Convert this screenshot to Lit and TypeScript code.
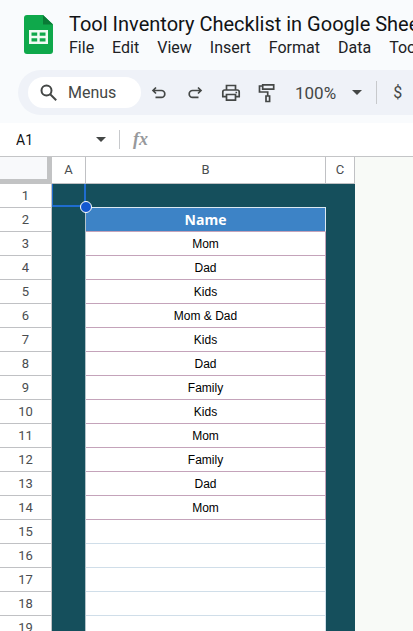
import { LitElement, html, css, svg } from "lit";
import { customElement } from "lit/decorators.js";

const NAMES = ["Mom", "Dad", "Kids", "Mom & Dad", "Kids", "Dad", "Family", "Kids", "Mom", "Family", "Dad", "Mom"];
const MENUS = ["File", "Edit", "View", "Insert", "Format", "Data", "Tools"];
const ROW_COUNT = 19;

const caret = html`<svg class="caret" viewBox="0 0 10 5" aria-hidden="true"><path d="M0 0h10L5 5z" /></svg>`;

const toolIcon = (shape: unknown) =>
  html`<svg class="icon" viewBox="0 0 20 20" aria-hidden="true">${shape}</svg>`;

const undoShape = svg`<path d="M7 4.500 4 7.500l3 3M4.400 7.500h8a3.400 3.400 0 0 1 0 6.800H6.500"/>`;
const redoShape = svg`<path d="M13 4.500l3 3-3 3M15.600 7.500h-8a3.400 3.400 0 0 0 0 6.800h5.900"/>`;
const printShape = svg`<path d="M5.500 6.500V2.500h9v4M5.500 13.700h-3.700V9q0-2 2-2h12.400q2 0 2 2v4.700h-3.700M5.500 11.500h9v5.700h-9z"/><path class="solid" d="M14.500 8.700h1.600v1.600h-1.600z"/>`;
const paintShape = svg`<path d="M5.700 1.800h11v4.400h-11zM5.700 3H2.500v6h8.200v4M9 13h3.600v5.500H9z"/>`;

@customElement("app-root")
export class AppRoot extends LitElement {
  static styles = css`
    :host {
      display: flex;
      flex-direction: column;
      height: 100vh;
      overflow: hidden;
      background: #f9fbfd;
      color: #202124;
      font-family: Roboto, "Liberation Sans", sans-serif;
    }
    * {
      box-sizing: border-box;
    }
    button,
    input {
      font: inherit;
      color: inherit;
      background: none;
      border: 0;
      padding: 0;
      margin: 0;
      min-width: 0;
      outline: none;
    }
    .top {
      display: flex;
      gap: 16px;
      padding: 12px 0 0 24px;
      height: 70px;
      flex: none;
    }
    .logo {
      width: 29px;
      height: 39px;
      margin-top: 3px;
      flex: none;
    }
    .heading {
      flex: 1;
      min-width: 0;
      overflow: hidden;
    }
    h1 {
      margin: 0;
      font-size: 20px;
      line-height: 24px;
      font-weight: 400;
      white-space: nowrap;
      color: #111315;
    }
    .menus {
      display: flex;
      gap: 18px;
      font-size: 16px;
      line-height: 24px;
      white-space: nowrap;
    }
    .menus button {
      flex: none;
    }
    .toolbar {
      display: flex;
      align-items: center;
      flex: none;
      height: 45px;
      margin: 0 0 8px 18px;
      padding-left: 10px;
      border-radius: 23px 0 0 23px;
      background: #eff2f8;
      color: #444746;
      overflow: hidden;
    }
    .toolbar > * {
      flex: none;
    }
    .search {
      display: flex;
      align-items: center;
      gap: 11px;
      width: 113px;
      height: 31px;
      padding-left: 12px;
      border-radius: 16px;
      background: #fff;
      font-size: 16px;
    }
    .search svg {
      width: 17px;
      height: 17px;
    }
    .tools {
      display: flex;
      gap: 16px;
      margin-left: 8px;
    }
    .tools button {
      display: flex;
    }
    .icon {
      width: 20px;
      height: 20px;
    }
    .icon,
    .search svg {
      fill: none;
      stroke: currentColor;
      stroke-width: 2;
    }
    .icon {
      stroke-width: 1.700;
    }
    .solid {
      fill: currentColor;
      stroke: none;
    }
    .zoom {
      display: flex;
      align-items: center;
      gap: 16px;
      margin-left: 18px;
      font-size: 17px;
    }
    .caret {
      width: 10px;
      height: 5px;
      fill: #444746;
    }
    .divider {
      width: 1px;
      background: #c7c9cc;
    }
    .toolbar .divider {
      height: 23px;
      margin: 0 16px 0 14px;
    }
    .currency {
      font-size: 16px;
    }
    .formula {
      display: flex;
      align-items: center;
      flex: none;
      height: 34px;
      padding-left: 16px;
      background: #fff;
      border-bottom: 1px solid #c4c5c7;
    }
    .name-box {
      width: 80px;
      font-size: 14px;
      color: #111315;
    }
    .formula button {
      display: flex;
    }
    .formula .divider {
      height: 19px;
      margin: 0 13px;
    }
    .fx {
      font: italic bold 18px "Liberation Serif", serif;
      color: #97999c;
    }
    .fx-input {
      flex: 1;
    }
    .sheet {
      flex: 1;
      min-height: 0;
      overflow: hidden;
      background: #f8faf7;
    }
    table {
      table-layout: fixed;
      width: 355px;
      border-spacing: 0;
      background: #fff;
    }
    .col-head {
      width: 52px;
    }
    .col-a {
      width: 34px;
    }
    .col-c {
      width: 29px;
    }
    th,
    td {
      height: 24px;
      padding: 0;
      text-align: center;
      line-height: 16px;
    }
    th {
      font-weight: 400;
      font-size: 13px;
      color: #4a4d50;
      border: solid #c0c1c4;
      border-width: 0 1px 1px 0;
    }
    thead th,
    thead td {
      height: 27px;
      border-bottom: 1px solid #c0c1c4;
    }
    .corner {
      background: #f8f9fb;
      border: solid #c2c3c4;
      border-width: 0 5px 5px 0;
    }
    thead .corner {
      border-bottom: 5px solid #c2c3c4;
    }
    .teal {
      background: #154f5c;
      position: relative;
    }
    .edge-top {
      border-bottom: 1px solid #dce9f2;
    }
    .name {
      background: #3d83c6;
      color: #fff;
      font: bold 14px "Open Sans", sans-serif;
      line-height: 16px;
    }
    .name,
    .value {
      border-style: solid;
      border-color: #c4a3ba;
      border-width: 0 1px 1px 0;
    }
    .name {
      border-right-color: #dce9f2;
    }
    .value {
      font-family: "Liberation Sans", sans-serif;
      font-size: 12px;
      color: #000;
    }
    .value.blank {
      border-color: #d0dee9;
    }
    .selection {
      position: absolute;
      inset: 0 0 1px 0;
      border: solid #1f6ccf;
      border-width: 0 2px 2px 1px;
      z-index: 1;
    }
    .handle {
      position: absolute;
      right: -8px;
      bottom: -8px;
      width: 12px;
      height: 12px;
      border: 1px solid #fff;
      border-radius: 50%;
      background: #1257cf;
    }
    .west {
      border-right: 1px solid #b4c4cb;
    }
  `;

  private row(n: number) {
    const name = NAMES[n - 3];
    const middle =
      n === 1
        ? html`<td class="teal edge-top"></td>`
        : n === 2
          ? html`<td class="name">Name</td>`
          : html`<td class="value ${name ? "" : "blank"}">${name ?? ""}</td>`;
    return html`<tr>
      <th scope="row">${n}</th>
      <td class="teal ${n === 1 ? "" : "west"}">
        ${n === 1 ? html`<div class="selection"><span class="handle"></span></div>` : ""}
      </td>
      ${middle}
      <td class="teal"></td>
    </tr>`;
  }

  render() {
    return html`
      <header class="top">
        <svg class="logo" viewBox="0 0 29 39" role="img" aria-label="Sheets">
          <path fill="#0fa84b" d="M3 0h16l10 9.500V36q0 3-3 3H3q-3 0-3-3V3q0-3 3-3z" />
          <path fill="#0a7a36" d="M19 0l10 9.500H19z" />
          <path
            fill="#f1fbf4"
            fill-rule="evenodd"
            d="M5 15h19v14H5zM7.500 17.500v3.200h5.700v-3.200zM15.700 17.500v3.200h5.800v-3.200zM7.500 23.200v3.300h5.700v-3.300zM15.700 23.200v3.300h5.800v-3.300z"
          />
        </svg>
        <div class="heading">
          <h1>Tool Inventory Checklist in Google Sheets</h1>
          <nav class="menus">${MENUS.map((m) => html`<button>${m}</button>`)}</nav>
        </div>
      </header>
      <div class="toolbar" role="toolbar">
        <button class="search">
          <svg viewBox="0 0 17 17" aria-hidden="true"><circle cx="6.500" cy="6.500" r="5" /><path d="M10.200 10.200l6 6" /></svg>
          Menus
        </button>
        <div class="tools">
          <button aria-label="Undo">${toolIcon(undoShape)}</button>
          <button aria-label="Redo">${toolIcon(redoShape)}</button>
          <button aria-label="Print">${toolIcon(printShape)}</button>
          <button aria-label="Paint format">${toolIcon(paintShape)}</button>
        </div>
        <button class="zoom" aria-label="Zoom">100% ${caret}</button>
        <span class="divider"></span>
        <button class="currency" aria-label="Format as currency">$</button>
      </div>
      <div class="formula">
        <input class="name-box" aria-label="Name box" value="A1" />
        <button aria-label="Named ranges">${caret}</button>
        <span class="divider"></span>
        <label class="fx" for="fx">fx</label>
        <input class="fx-input" id="fx" />
      </div>
      <main class="sheet">
        <table>
          <colgroup>
            <col class="col-head" />
            <col class="col-a" />
            <col />
            <col class="col-c" />
          </colgroup>
          <thead>
            <tr>
              <td class="corner"></td>
              <th scope="col">A</th>
              <th scope="col">B</th>
              <th scope="col">C</th>
            </tr>
          </thead>
          <tbody>
            ${Array.from({ length: ROW_COUNT }, (_, i) => this.row(i + 1))}
          </tbody>
        </table>
      </main>
    `;
  }
}
